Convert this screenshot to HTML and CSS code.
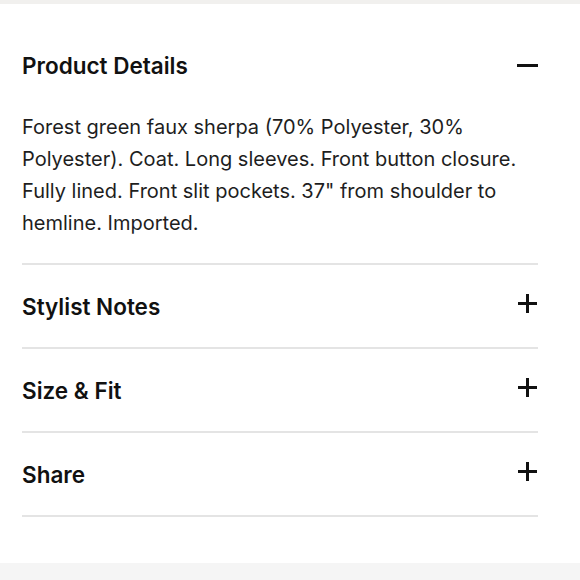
FILE: index.html
```html
<!DOCTYPE html>
<html lang="en">
<head>
    <meta charset="UTF-8">
    <meta name="viewport" content="width=device-width, initial-scale=1.0">
    <title>Product Details</title>
    <link rel="stylesheet" href="styles.css">
</head>
<body>
    <div class="top-bar"></div>
    <div class="details">
        <div class="section open">
            <div class="section-header">
                <h3>Product Details</h3>
                <span class="toggle minus"></span>
            </div>
            <p class="section-body">Forest green faux sherpa (70% Polyester, 30% Polyester). Coat. Long sleeves. Front button closure. Fully lined. Front slit pockets. 37" from shoulder to hemline. Imported.</p>
        </div>
        <div class="section">
            <div class="section-header">
                <h3>Stylist Notes</h3>
                <span class="toggle plus"></span>
            </div>
        </div>
        <div class="section">
            <div class="section-header">
                <h3>Size &amp; Fit</h3>
                <span class="toggle plus"></span>
            </div>
        </div>
        <div class="section">
            <div class="section-header">
                <h3>Share</h3>
                <span class="toggle plus"></span>
            </div>
        </div>
    </div>
    <div class="bottom-bar"></div>
</body>
</html>
```

FILE: styles.css
```css
body {
    font-family: Inter, "Liberation Sans", Arial, sans-serif;
    background-color: #ffffff;
    color: #111;
    margin: 0;
    padding: 0;
    height: 580px;
    display: flex;
    flex-direction: column;
}
.top-bar {
    height: 4px;
    background-color: #f1f0ee;
}
.details {
    flex: 1;
    padding: 20px 42px 0 22px;
}
.section {
    border-bottom: 2px solid #e4e4e4;
}
.section-header {
    height: 82px;
    display: flex;
    align-items: center;
    justify-content: space-between;
}
h3 {
    margin: 0;
    font-size: 22.5px;
    font-weight: 600;
    color: #111;
}
.section-body {
    margin: 0;
    padding: 5px 0 24px;
    font-size: 20px;
    line-height: 32px;
    color: #1e1e1e;
}
.toggle {
    position: relative;
    width: 19px;
    height: 19px;
}
.toggle::before, .toggle::after {
    content: "";
    position: absolute;
    background-color: #111;
}
.toggle::before {
    left: 0;
    right: 0;
    top: 8px;
    height: 3px;
}
.plus {
    margin: -6px 1px 0 0;
}
.plus::after {
    top: 0;
    bottom: 0;
    left: 8px;
    width: 3px;
}
.minus {
    width: 21px;
}
.bottom-bar {
    height: 17px;
    background-color: #f5f5f5;
}
```
